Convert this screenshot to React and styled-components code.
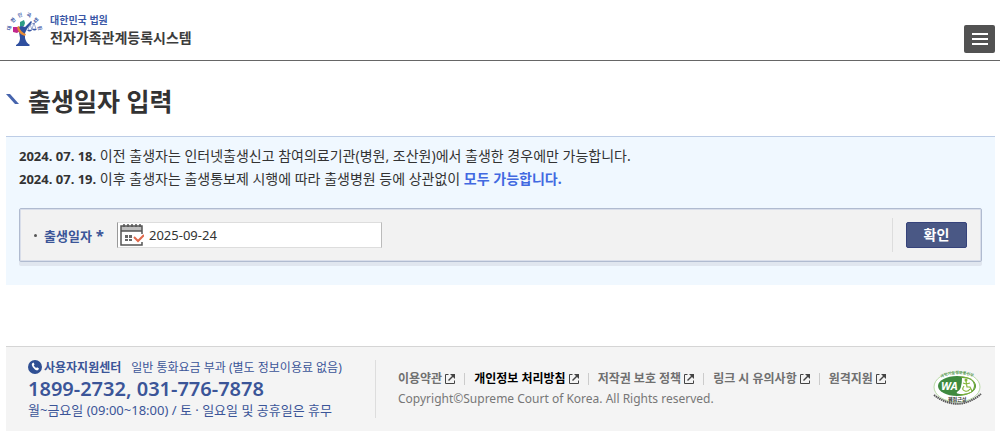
import React, { useState } from "react";
import styled, { createGlobalStyle } from "styled-components";

const links = [
  { label: "이용약관" },
  { label: "개인정보 처리방침", strong: true },
  { label: "저작권 보호 정책" },
  { label: "링크 시 유의사항" },
  { label: "원격지원" },
];

const emblemLetters = [
  { char: "대", x: 3, y: 17, angle: -75 },
  { char: "한", x: 7, y: 9, angle: -45 },
  { char: "민", x: 14, y: 4, angle: -15 },
  { char: "국", x: 23, y: 4, angle: 15 },
  { char: "법", x: 30, y: 9, angle: 45 },
  { char: "원", x: 34, y: 17, angle: 75 },
];

const CourtEmblem = () => (
  <svg width="38" height="38" viewBox="0 0 38 38" aria-hidden="true">
    {emblemLetters.map(({ char, x, y, angle }) => (
      <text
        key={char}
        transform={`translate(${x} ${y}) rotate(${angle})`}
        y="2"
        fontSize="5"
        fontWeight="700"
        textAnchor="middle"
        fill="#3a57a6"
      >
        {char}
      </text>
    ))}
    <path d="M14 11l4-2 1 3-1 3-4 1z" fill="#2c9c86" />
    <path d="M7 16h5l2 4-3 2-4-1z" fill="#c2278c" />
    <path
      d="M12 16l4-1 3 1 6-6 1 1-5 7-2 4 0 5q1 5 5 7l-1 1H10l0-1q4-2 4-7l-1-6z"
      fill="#2f4f9f"
    />
    <path d="M11 16l2-1q1 6 7 8l-1 2q-7-2-8-9z" fill="#e78b35" />
    <path
      d="M22 14l7-2M24 13l-2 6h4zM28 12l-2 6h4z"
      stroke="#3a57a6"
      strokeWidth="0.5"
      fill="none"
    />
    <path d="M21 19h5q-2.5 3-5 0zM26 18h5q-2.5 3-5 0z" fill="#3a57a6" />
  </svg>
);

const CalendarIcon = () => (
  <svg width="24" height="24" viewBox="0 0 24 24" aria-hidden="true">
    <path d="M1 3h21v5H1z" fill="#bdbdbd" />
    <path
      d="M22 11V3H1v19h21v-3M1 8h21"
      fill="none"
      stroke="#555"
      strokeWidth="1.5"
    />
    <path d="M4 1v3M8 1v3M12 1v3M16 1v3M20 1v3" stroke="#555" strokeWidth="1.5" />
    <path d="M5 12h3v3H5zM9 12h3v3H9zM5 16h3v2H5zM9 16h3v2H9z" fill="#666" />
    <path d="M14 14l4 4 6-6" fill="none" stroke="#e0694c" strokeWidth="2" />
  </svg>
);

const PhoneIcon = () => (
  <svg width="14" height="14" viewBox="0 0 14 14" aria-hidden="true">
    <circle cx="7" cy="7" r="7" fill="#2f4f93" />
    <path
      d="M4.3 3.2l1.2-.7 1.1 2-.9.8q.7 1.8 2.4 2.8l1-.8 1.9 1.3-.8 1.4q-1.3.8-3.3-.6-2.6-1.9-3.1-4.4-.1-1.2.5-1.8z"
      fill="#fff"
    />
  </svg>
);

const ExternalIcon = () => (
  <svg width="10" height="10" viewBox="0 0 10 10" aria-hidden="true">
    <path d="M3.5 .5H.5v9h9V6.5" fill="none" stroke="currentColor" />
    <path d="M3.5 6.5L8 2" fill="none" stroke="currentColor" strokeWidth="1.5" />
    <path d="M5 0h5v5z" fill="currentColor" />
  </svg>
);

const AccessibilityMark = () => (
  <svg width="50" height="38" viewBox="0 0 50 38" role="img" aria-label="웹접근성 인증마크">
    <defs>
      <path id="mark-top" d="M8 8 Q25 0 43 8" />
    </defs>
    <ellipse cx="24" cy="17" rx="23" ry="15" fill="#fff" stroke="#b9dba6" />
    <text fontSize="4" fontWeight="700" fill="#5b9a5b">
      <textPath href="#mark-top">과학기술정보통신부</textPath>
    </text>
    <ellipse cx="24" cy="16" rx="19" ry="10" fill="#3f8a3f" />
    <path
      d="M29 8q12 0 12 8 0 7-11 8-8 0-6-2 5-2 5-14z"
      fill="#fff"
    />
    <path d="M28 7q14 0 14 9 0 8-15 9" fill="none" stroke="#82b536" />
    <text x="8" y="20" fontSize="11" fontWeight="700" fontStyle="italic" fill="#fff">
      WA
    </text>
    <circle cx="33" cy="10" r="1.5" fill="#82b536" />
    <path
      d="M33 11l1 6h3l2 4M30 13l3 1 4-1M31 16q-3 4 1 5 3 1 5-2"
      stroke="#82b536"
      strokeWidth="1.2"
      fill="none"
    />
    <text x="15" y="31" fontSize="5" fontWeight="700" fill="#333">
      웹접근성
    </text>
    <path
      d="M1 25Q25 43 48 24"
      fill="none"
      stroke="#555"
      strokeWidth="2"
      strokeDasharray="1.5 0.6"
    />
  </svg>
);

const App = () => {
  const [date, setDate] = useState("2025-09-24");

  return (
    <>
      <GlobalStyles />
      <Header>
        <LogoLink href="#">
          <CourtEmblem />
          <LogoText>
            <LogoOwner>대한민국 법원</LogoOwner>
            <LogoName>전자가족관계등록시스템</LogoName>
          </LogoText>
        </LogoLink>
        <MenuButton type="button" aria-label="전체메뉴">
          <svg width="16" height="13" viewBox="0 0 16 13" aria-hidden="true">
            <path d="M0 1h16M0 6h16M0 11h16" stroke="#fff" strokeWidth="2" />
          </svg>
        </MenuButton>
      </Header>
      <Main>
        <Title>
          <svg width="13" height="11" viewBox="0 0 13 11" aria-hidden="true">
            <path d="M0 0h4l9 10h-4z" fill="#4664ad" />
          </svg>
          출생일자 입력
        </Title>
        <Content>
          <Notice>
            <NoticeDate>2024. 07. 18.</NoticeDate> 이전 출생자는 인터넷출생신고
            참여의료기관(병원, 조산원)에서 출생한 경우에만 가능합니다.
          </Notice>
          <Notice>
            <NoticeDate>2024. 07. 19.</NoticeDate> 이후 출생자는 출생통보제 시행에
            따라 출생병원 등에 상관없이 <Highlight>모두 가능합니다.</Highlight>
          </Notice>
          <SearchForm onSubmit={(e) => e.preventDefault()}>
            <FieldLabel htmlFor="birth">
              출생일자 <Required>*</Required>
            </FieldLabel>
            <DateField>
              <CalendarButton type="button" aria-label="달력">
                <CalendarIcon />
              </CalendarButton>
              <DateInput
                id="birth"
                type="text"
                value={date}
                onChange={(e) => setDate(e.target.value)}
              />
            </DateField>
            <Actions>
              <SubmitButton type="submit">확인</SubmitButton>
            </Actions>
          </SearchForm>
        </Content>
      </Main>
      <Footer>
        <Support>
          <SupportHead>
            <PhoneIcon />
            <strong>사용자지원센터</strong>
            <span>일반 통화요금 부과 (별도 정보이용료 없음)</span>
          </SupportHead>
          <SupportPhone>1899-2732, 031-776-7878</SupportPhone>
          <SupportHours>
            월~금요일 (09:00~18:00) / 토 · 일요일 및 공휴일은 휴무
          </SupportHours>
        </Support>
        <Policy>
          <LinkList>
            {links.map((link) => (
              <LinkItem key={link.label}>
                <FooterLink href="#" $strong={link.strong}>
                  {link.label}
                  <ExternalIcon />
                </FooterLink>
              </LinkItem>
            ))}
          </LinkList>
          <Copyright>
            Copyright©Supreme Court of Korea. All Rights reserved.
          </Copyright>
        </Policy>
        <AccessibilityMark />
      </Footer>
    </>
  );
};

const GlobalStyles = createGlobalStyle`
  * {
    box-sizing: border-box;
    margin: 0;
    padding: 0;
  }
  body {
    background: #fff;
    color: #333;
    font-family: "Noto Sans", "Noto Sans CJK KR", sans-serif;
    font-size: 14px;
  }
  button, input {
    font-family: inherit;
  }
  a {
    color: inherit;
    text-decoration: none;
  }
  svg {
    flex: none;
  }
`;

const Header = styled.header`
  display: flex;
  justify-content: space-between;
  align-items: center;
  height: 61px;
  padding: 0 5px 0 6px;
  border-bottom: 1px solid #666;
`;

const LogoLink = styled.a`
  display: flex;
  align-items: center;
  gap: 6px;
`;

const LogoText = styled.span`
  display: flex;
  flex-direction: column;
  font-weight: 700;
`;

const LogoOwner = styled.span`
  color: #3a57a6;
  font-size: 10px;
  line-height: 16px;
`;

const LogoName = styled.span`
  color: #3c3c3c;
  font-size: 14px;
  line-height: 20px;
`;

const MenuButton = styled.button`
  display: flex;
  align-items: center;
  justify-content: center;
  width: 31px;
  height: 28px;
  margin-top: 18px;
  background: #525252;
  border: 0;
  border-radius: 2px;
  cursor: pointer;
`;

const Main = styled.main`
  padding: 0 5px 0 6px;
`;

const Title = styled.h1`
  display: flex;
  align-items: center;
  gap: 9px;
  height: 75px;
  padding-top: 2px;
  font-size: 25px;
`;

const Content = styled.section`
  padding: 7px 13px 23px;
  background: #f0f8ff;
  border-top: 1px solid #bdcde6;
`;

const Notice = styled.p`
  line-height: 23px;
`;

const NoticeDate = styled.strong`
  font-size: 13px;
  line-height: 1;
`;

const Highlight = styled.strong`
  color: #4169e1;
`;

const SearchForm = styled.form`
  display: flex;
  align-items: center;
  height: 54px;
  margin-top: 18px;
  padding: 0 14px;
  background: #f2f2f2;
  border: 1px solid #b0bbd0;
  border-radius: 2px;
  box-shadow: 0 4px 0 #e0e6ef, inset 0 0 0 1px #d9deea;
`;

const FieldLabel = styled.label`
  display: flex;
  align-items: center;
  gap: 4px;
  width: 83px;
  color: #3b5598;
  font-size: 13px;
  font-weight: 700;
  &::before {
    content: "";
    width: 3px;
    height: 3px;
    margin-right: 3px;
    background: #555;
    border-radius: 50%;
  }
`;

const Required = styled.span`
  font-size: 15px;
`;

const DateField = styled.div`
  display: flex;
  align-items: center;
  width: 265px;
  height: 26px;
  background: #fff;
  border: 1px solid #ddd;
  border-left-color: #999;
  border-right-color: #bbb;
`;

const CalendarButton = styled.button`
  display: flex;
  padding: 0 2px;
  background: none;
  border: 0;
  cursor: pointer;
`;

const DateInput = styled.input`
  flex: 1;
  min-width: 0;
  padding: 0 3px;
  color: #333;
  background: none;
  border: 0;
  outline: 0;
  font-size: 13px;
`;

const Actions = styled.div`
  display: flex;
  align-items: center;
  height: 34px;
  margin-left: auto;
  padding-left: 13px;
  border-left: 1px solid #ddd;
`;

const SubmitButton = styled.button`
  width: 61px;
  height: 26px;
  color: #fff;
  background: #4a5885;
  border: 1px solid #36437b;
  border-radius: 2px;
  font-size: 14px;
  font-weight: 700;
  line-height: 20px;
  cursor: pointer;
`;

const Footer = styled.footer`
  display: flex;
  align-items: center;
  height: 85px;
  margin: 61px 5px 8px 6px;
  padding: 0 12px 0 22px;
  background: #f4f4f4;
  border-top: 1px solid #d5d5d5;
`;

const Support = styled.div`
  width: 348px;
  height: 58px;
  color: #3b5598;
  border-right: 1px solid #ddd;
`;

const SupportHead = styled.p`
  display: flex;
  align-items: center;
  gap: 2px;
  height: 14px;
  font-size: 12px;
  span {
    margin-left: 8px;
  }
`;

const SupportPhone = styled.p`
  font-size: 20px;
  font-weight: 600;
  line-height: 30px;
`;

const SupportHours = styled.p`
  font-size: 13px;
  line-height: 13px;
`;

const Policy = styled.div`
  flex: 1;
  padding-left: 22px;
  color: #777;
`;

const LinkList = styled.ul`
  display: flex;
  list-style: none;
`;

const LinkItem = styled.li`
  display: flex;
  align-items: center;
  line-height: 20px;
  & + &::before {
    content: "";
    width: 1px;
    height: 12px;
    margin: 0 9px;
    background: #ccc;
  }
`;

const FooterLink = styled.a`
  display: flex;
  align-items: center;
  gap: 3px;
  color: ${({ $strong }) => ($strong ? "#000" : "#707070")};
  font-size: 12px;
  font-weight: 700;
  svg {
    color: #444;
  }
`;

const Copyright = styled.p`
  font-size: 12px;
  line-height: 20px;
`;

export default App;
